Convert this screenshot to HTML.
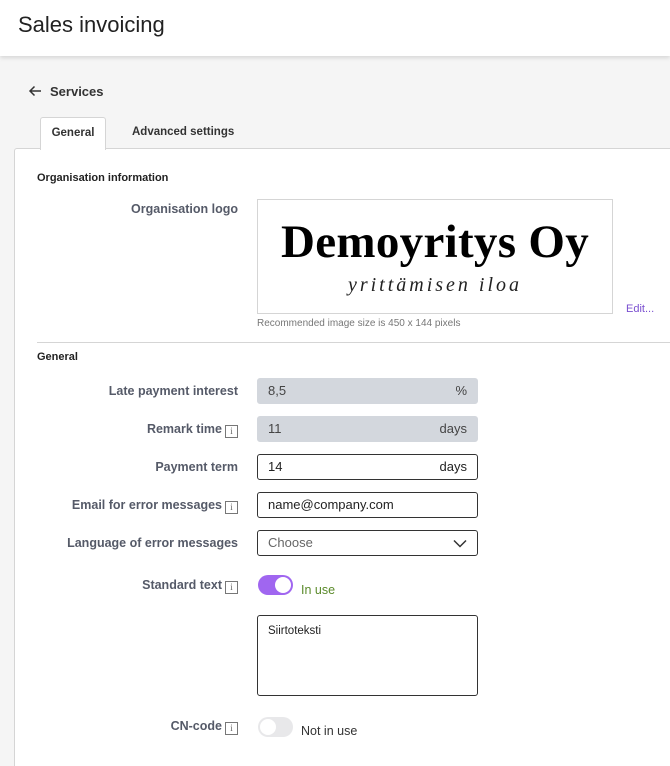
<!DOCTYPE html>
<html style="height:766px;overflow:hidden"><head><meta charset="utf-8"><style>
*{box-sizing:border-box;margin:0;padding:0}
body{width:670px;height:766px;overflow:hidden;background:#f5f5f5;font-family:"Liberation Sans",sans-serif;color:#333;position:relative}
.hdr{position:absolute;left:0;top:0;width:670px;height:56px;background:#fff;box-shadow:0 2px 4px rgba(0,0,0,.12)}
.hdr h1{position:absolute;left:18px;top:12px;font-size:22px;font-weight:normal;color:#222}
.abs{position:absolute}
.back{left:28px;top:84px;font-size:13px;font-weight:bold;color:#333}
.tab{left:40px;top:117px;width:66px;height:33px;background:#fff;border:1px solid #d5d5d5;border-bottom:none;border-radius:3px 3px 0 0;font-size:11.5px;font-weight:bold;text-align:center;line-height:31px;z-index:2}
.tab2{left:132px;top:126px;font-size:11.5px;font-weight:bold}
.panel{left:14px;top:148px;width:670px;height:630px;background:#fff;border:1px solid #d5d5d5;border-radius:3px}
.sec{font-size:11px;font-weight:bold;color:#222}
.lbl{right:432px;font-size:12.5px;font-weight:bold;color:#555a68;text-align:right;white-space:nowrap}
.i{display:inline-block;width:13px;height:13px;border:1px solid #777;font-size:9px;line-height:11px;text-align:center;color:#666;font-weight:normal;vertical-align:-1px;margin-left:3px;font-family:"Liberation Serif",serif}
.inp{left:257px;width:221px;height:26px;border:1px solid #333;border-radius:3px;font-size:13px;padding:0 10px;line-height:24px;color:#222}
.inp.g{background:#d3d7dd;border-color:#d3d7dd;color:#444}
.inp span{float:right}
</style></head><body>
<div class="hdr"><h1>Sales invoicing</h1></div>
<div class="abs back"><svg width="14" height="12" viewBox="0 0 14 12" style="vertical-align:-1px;margin-right:8px"><path d="M13 6H2M6.5 1.5L2 6l4.5 4.5" stroke="#333" stroke-width="1.5" fill="none"/></svg>Services</div>
<div class="abs panel"></div>
<div class="abs tab">General</div>
<div class="abs tab2">Advanced settings</div>
<div class="abs sec" style="left:37px;top:172px">Organisation information</div>
<div class="abs lbl" style="top:202px">Organisation logo</div>
<div class="abs" style="left:257px;top:199px;width:356px;height:115px;border:1px solid #d5d5d5;text-align:center;overflow:hidden">
<div style="font-family:'Liberation Serif',serif;font-weight:bold;font-size:47px;color:#000;margin-top:14px;line-height:56px;letter-spacing:0.3px">Demoyritys Oy</div>
<div style="font-family:'Liberation Serif',serif;font-style:italic;font-size:20px;color:#222;letter-spacing:3px;margin-top:4px">yrittämisen iloa</div>
</div>
<div class="abs" style="left:626px;top:303px;font-size:11px;color:#7a4fd0">Edit...</div>
<div class="abs" style="left:257px;top:318px;font-size:10px;color:#777">Recommended image size is 450 x 144 pixels</div>
<div class="abs" style="left:37px;top:342px;width:633px;height:1px;background:#d5d5d5"></div>
<div class="abs sec" style="left:37px;top:351px">General</div>
<div class="abs lbl" style="top:384px">Late payment interest</div>
<div class="abs inp g" style="top:378px">8,5<span>%</span></div>
<div class="abs lbl" style="top:422px">Remark time<span class="i">i</span></div>
<div class="abs inp g" style="top:416px">11<span>days</span></div>
<div class="abs lbl" style="top:460px">Payment term</div>
<div class="abs inp" style="top:454px">14<span>days</span></div>
<div class="abs lbl" style="top:498px">Email for error messages<span class="i">i</span></div>
<div class="abs inp" style="top:492px">name@company.com</div>
<div class="abs lbl" style="top:536px">Language of error messages</div>
<div class="abs inp" style="top:530px;color:#666">Choose<span><svg width="14" height="9" viewBox="0 0 14 9" style="margin-top:8px"><path d="M1 1.5l6 6 6-6" stroke="#333" stroke-width="1.5" fill="none"/></svg></span></div>
<div class="abs lbl" style="top:578px">Standard text<span class="i">i</span></div>
<div class="abs" style="left:258px;top:575px;width:35px;height:20px;border-radius:10px;background:#a066f0"><div style="position:absolute;right:2px;top:2px;width:16px;height:16px;border-radius:50%;background:#fff"></div></div>
<div class="abs" style="left:301px;top:583px;font-size:12.5px;color:#5a8a2a">In use</div>
<div class="abs" style="left:257px;top:615px;width:221px;height:81px;border:1px solid #333;border-radius:3px;font-size:11.5px;padding:9px 10px;color:#222">Siirtoteksti</div>
<div class="abs lbl" style="top:719px">CN-code<span class="i">i</span></div>
<div class="abs" style="left:258px;top:717px;width:35px;height:20px;border-radius:10px;background:#e8e8ea"><div style="position:absolute;left:2px;top:2px;width:16px;height:16px;border-radius:50%;background:#fff"></div></div>
<div class="abs" style="left:301px;top:724px;font-size:12.5px;color:#333">Not in use</div>
</body></html>
